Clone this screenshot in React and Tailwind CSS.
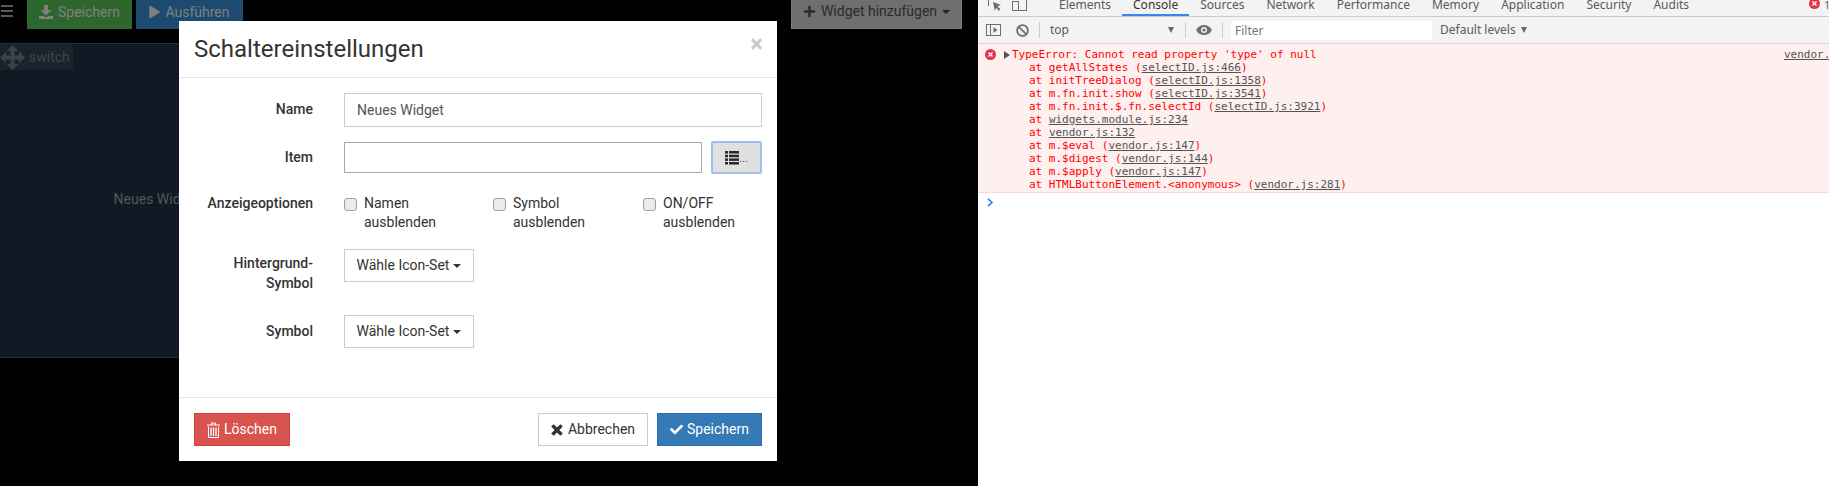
import React from 'react';
import { FaPlus, FaPlay, FaCheck } from 'react-icons/fa';

const SaveIcon = () => (
    <svg width="14" height="14" viewBox="0 0 14 14" fill="currentColor">
        <path d="M5 0h4v5h3.500L7 10.500 1.500 5H5z" />
        <path d="M0 11h4.500l2.500 1.500 2.500-1.500H14v3H0z" />
    </svg>
);

const MoveIcon = () => (
    <svg width="25" height="25" viewBox="0 0 25 25" fill="#3b424a" className="shrink-0">
        <path d="M12.500 0l6 6h-4v4.500H19v-4l6 6-6 6v-4h-4.500V19h4l-6 6-6-6h4v-4.500H6v4l-6-6 6-6v4h4.500V6h-4z" />
    </svg>
);

const ListIcon = () => (
    <svg width="14" height="14" viewBox="0 0 14 14" fill="#2a2a2a">
        <rect x="0" y="0" width="3" height="2.500" />
        <rect x="4" y="0" width="10" height="2.500" />
        <rect x="0" y="3.700" width="3" height="2.500" />
        <rect x="4" y="3.700" width="10" height="2.500" />
        <rect x="0" y="7.400" width="3" height="2.500" />
        <rect x="4" y="7.400" width="10" height="2.500" />
        <rect x="0" y="11" width="3" height="2.500" />
        <rect x="4" y="11" width="10" height="2.500" />
    </svg>
);

const TrashIcon = () => (
    <svg width="13" height="16" viewBox="0 0 13 16" fill="none" stroke="#fff" strokeWidth="1">
        <path d="M0 3h13M4.500 3V1h4v2" />
        <path d="M1.500 4.500v11h10v-11" />
        <path d="M4 5.500v8.500M6.500 5.500v8.500M9 5.500v8.500" strokeWidth="1.300" />
    </svg>
);

const RemoveIcon = () => (
    <svg width="12" height="12" viewBox="0 0 12 12" fill="#333">
        <path d="M2.600 0.200L6 3.600 9.400 0.200 11.800 2.600 8.400 6l3.400 3.400-2.400 2.400L6 8.400l-3.400 3.400L0.200 9.400 3.600 6 0.200 2.600z" />
    </svg>
);

const Caret = ({ className }) => (
    <span className={`inline-block w-0 h-0 border-x-[4px] border-x-transparent border-t-[4px] ${className}`} />
);

const FormRow = ({ label, children, className, labelClass }) => (
    <div className={`flex items-start ${className}`}>
        <label className={`w-[119px] mr-[31px] text-right font-medium text-[#333] leading-[20px] shrink-0 ${labelClass}`}>{label}</label>
        {children}
    </div>
);

const Check = ({ children, className }) => (
    <label className={`flex items-start gap-[7px] leading-[19px] text-[#333] ${className}`}>
        <input type="checkbox" className="appearance-none w-[13px] h-[13px] mt-[4px] rounded-[3px] border border-[#a0a0a0] bg-[#ececec] shrink-0" />
        <span>{children}</span>
    </label>
);

const IconSetDropdown = () => (
    <button className="flex items-center gap-[4px] h-[33px] w-[130px] justify-center border border-[#ccc] bg-white text-[#333]">
        Wähle Icon-Set <Caret className="border-t-[#333]" />
    </button>
);

const Modal = () => (
    <div className="absolute left-[179px] top-[21px] w-[598px] h-[440px] bg-white flex flex-col text-[14px]">
        <div className="h-[57px] shrink-0 flex items-start justify-between border-b border-[#e5e5e5] pl-[15px] pr-[14px]">
            <h4 className="text-[24px] leading-[56px] text-[#333]">Schaltereinstellungen</h4>
            <span className="text-[#c8c8c8] text-[24px] leading-[46px] font-bold">×</span>
        </div>
        <div className="flex-1 px-[15px] pt-[15px]">
            <FormRow label="Name" className="h-[34px]" labelClass="pt-[6px]">
                <input readOnly value="Neues Widget" className="w-[418px] h-[34px] border border-[#ccc] px-[12px] text-[#555] outline-none" />
            </FormRow>
            <FormRow label="Item" className="mt-[14px] h-[33px]" labelClass="pt-[6px]">
                <div className="flex items-center gap-[9px]">
                    <input readOnly className="w-[358px] h-[31px] border border-[#a9a9a9] outline-none" />
                    <button className="w-[51px] h-[33px] flex items-center justify-center bg-[#e0e0e0] border-2 border-[#9ec0ee] rounded-[2px] text-[#555] text-[11px]">
                        <ListIcon />
                        <span className="leading-[14px] pt-[3px]">...</span>
                    </button>
                </div>
            </FormRow>
            <FormRow label="Anzeigeoptionen" className="mt-[20px] h-[41px]" labelClass="-mt-[1px]">
                <div className="flex">
                    <Check className="w-[149px]">Namen<br />ausblenden</Check>
                    <Check className="w-[150px]">Symbol<br />ausblenden</Check>
                    <Check className="w-[119px]">ON/OFF<br />ausblenden</Check>
                </div>
            </FormRow>
            <FormRow label={<>Hintergrund-<br />Symbol</>} className="mt-[14px] h-[33px]" labelClass="pt-[4px]">
                <IconSetDropdown />
            </FormRow>
            <FormRow label="Symbol" className="mt-[33px] h-[33px]" labelClass="pt-[6px]">
                <IconSetDropdown />
            </FormRow>
        </div>
        <div className="h-[64px] shrink-0 border-t border-[#e5e5e5] px-[15px] pt-[15px] flex items-start">
            <button className="h-[33px] w-[96px] flex items-center justify-center gap-[4px] bg-[#d9534f] border border-[#d43f3a] text-white">
                <TrashIcon /> Löschen
            </button>
            <button className="ml-auto h-[33px] w-[110px] flex items-center justify-center gap-[5px] bg-white border border-[#ccc] text-[#333]">
                <RemoveIcon /> Abbrechen
            </button>
            <button className="ml-[9px] h-[33px] w-[105px] flex items-center justify-center gap-[4px] bg-[#337ab7] border border-[#2e6da4] text-white">
                <FaCheck className="w-[13px] h-[13px]" /> Speichern
            </button>
        </div>
    </div>
);

const LeftApp = () => (
    <div className="relative w-[978px] shrink-0 bg-black overflow-hidden font-['Roboto',sans-serif] text-[14px]">
        <div className="h-[43px] flex items-start">
            <div className="w-[27px] pl-[1px] pt-[5px] flex flex-col gap-[3px] shrink-0">
                <span className="block w-[12px] h-[2px] bg-[#5a5a5a]" />
                <span className="block w-[12px] h-[2px] bg-[#5a5a5a]" />
                <span className="block w-[12px] h-[2px] bg-[#5a5a5a]" />
            </div>
            <button className="h-[29px] w-[105px] flex items-center justify-center gap-[5px] pb-[5px] bg-[#2e672e] text-[#808080] text-[14px]">
                <SaveIcon /> Speichern
            </button>
            <button className="ml-[4px] h-[29px] w-[107px] flex items-center justify-center gap-[5px] pb-[5px] bg-[#1c4a70] text-[#808080]">
                <FaPlay className="w-[11px] h-[12px]" /> Ausführen
            </button>
            <button className="ml-[548px] h-[29px] w-[171px] flex items-center justify-center gap-[5px] pb-[5px] bg-[#6f6f6f] border border-[#7c7c7c] border-t-0 text-[#2a2a2a]">
                <FaPlus className="w-[13px] h-[13px]" /> Widget hinzufügen <Caret className="border-t-[#222]" />
            </button>
        </div>
        <div className="w-[314px] h-[315px] bg-[#111a24] border-y border-[#2a3038] flex flex-col">
            <div className="w-[73px] h-[26px] shrink-0 bg-[#1a222c] flex items-center gap-[4px] text-[#3f464e] text-[14px]">
                <MoveIcon /> switch
            </div>
            <div className="flex-1 flex items-center justify-center pb-[28px] text-[#51575e]">
                <span>Neues Widget</span>
            </div>
        </div>
        <Modal />
    </div>
);

const InspectIcon = () => (
    <svg width="14" height="13" viewBox="0 0 14 13" fill="none" className="shrink-0">
        <path d="M0.500 8V0.500H10" stroke="#6e6e6e" />
        <path d="M5 4l8 3-3.500 1.200 3 3-1.500 1.500-3-3-1.200 3.300z" fill="#6e6e6e" />
    </svg>
);

const DeviceIcon = () => (
    <svg width="15" height="13" viewBox="0 0 15 13" fill="none" stroke="#6e6e6e" className="shrink-0">
        <path d="M4 0.500h10.500v12H4" />
        <rect x="0.500" y="3.500" width="6" height="9" />
    </svg>
);

const ErrorIcon = ({ className }) => (
    <svg width="11" height="11" viewBox="0 0 11 11" className={className}>
        <circle cx="5.500" cy="5.500" r="5.500" fill="#e8334a" />
        <path d="M3.500 3.500l4 4M7.500 3.500l-4 4" stroke="#fff" strokeWidth="1.400" />
    </svg>
);

const Sep = ({ className }) => <span className={`block w-px h-[16px] bg-[#ccc] shrink-0 ${className}`} />;

const tabs = ['Elements', 'Console', 'Sources', 'Network', 'Performance', 'Memory', 'Application', 'Security', 'Audits'];

const TabBar = () => (
    <div className="relative h-[17px] shrink-0 bg-[#f3f3f3] border-b border-[#ccc] flex items-end overflow-hidden">
        <div className="w-[69px] h-[16px] flex items-end pl-[10px] gap-[10px] pb-[5px] shrink-0">
            <InspectIcon />
            <DeviceIcon />
        </div>
        <div className="flex h-[16px] text-[12px] text-[#5a5a5a] ml-[1px]">
            {tabs.map((t) => (
                <span key={t} className={`h-[16px] px-[11px] leading-[9px] ${t === 'Console' ? 'border-b-2 border-[#3e82f7] text-[#333]' : ''}`}>{t}</span>
            ))}
        </div>
        <span className="absolute right-0 top-0 h-[10px] w-[20px] overflow-hidden text-[11px] text-[#666] leading-[9px] flex">
            <ErrorIcon className="-mt-[2px] shrink-0" />
            <span className="ml-[4px]">1</span>
        </span>
    </div>
);

const Toolbar = () => (
    <div className="h-[27px] shrink-0 bg-[#f3f3f3] border-b border-[#d6d6d6] flex items-center text-[12px] text-[#5a5a5a]">
        <svg width="15" height="12" viewBox="0 0 15 12" className="ml-[8px] shrink-0" fill="none" stroke="#6e6e6e">
            <rect x="0.500" y="0.500" width="14" height="11" />
            <path d="M4.500 0.500v11" />
            <path d="M7.500 3l4 3-4 3z" fill="#6e6e6e" stroke="none" />
        </svg>
        <svg width="13" height="13" viewBox="0 0 13 13" className="ml-[15px] shrink-0" fill="none" stroke="#6e6e6e" strokeWidth="1.800">
            <circle cx="6.500" cy="6.500" r="5.400" />
            <path d="M2.800 2.800l7.400 7.400" />
        </svg>
        <Sep className="ml-[10px]" />
        <span className="ml-[10px] w-[118px] shrink-0">top</span>
        <span className="w-0 h-0 border-x-[3.5px] border-x-transparent border-t-[6px] border-t-[#666] shrink-0" />
        <Sep className="ml-[11px]" />
        <svg width="16" height="10" viewBox="0 0 16 10" className="ml-[10px] shrink-0" fill="#6e6e6e">
            <path fillRule="evenodd" d="M8 0c3.500 0 6.500 2 8 5-1.500 3-4.500 5-8 5S1.500 8 0 5c1.500-3 4.500-5 8-5zm0 2a3 3 0 100 6 3 3 0 000-6z" />
            <circle cx="8" cy="5" r="1.600" />
        </svg>
        <Sep className="ml-[10px]" />
        <div className="ml-[8px] w-[201px] h-[19px] bg-white pl-[4px] leading-[19px] text-[#757575] shrink-0">Filter</div>
        <span className="ml-[8px]">Default levels</span>
        <span className="ml-[5px] w-0 h-0 border-x-[3.5px] border-x-transparent border-t-[6px] border-t-[#666]" />
    </div>
);

const L = ({ children }) => <a className="underline text-[#545454]">{children}</a>;

const stack = [
    <>at getAllStates (<L>selectID.js:466</L>)</>,
    <>at initTreeDialog (<L>selectID.js:1358</L>)</>,
    <>at m.fn.init.show (<L>selectID.js:3541</L>)</>,
    <>at m.fn.init.$.fn.selectId (<L>selectID.js:3921</L>)</>,
    <>at <L>widgets.module.js:234</L></>,
    <>at <L>vendor.js:132</L></>,
    <>at m.$eval (<L>vendor.js:147</L>)</>,
    <>at m.$digest (<L>vendor.js:144</L>)</>,
    <>at m.$apply (<L>vendor.js:147</L>)</>,
    <>at HTMLButtonElement.&lt;anonymous&gt; (<L>vendor.js:281</L>)</>,
];

const ConsoleMsg = () => (
    <div className="relative h-[149px] shrink-0 bg-[#fff0f0] border-b border-[#ffd6d6] pt-[4px] font-['DejaVu_Sans_Mono',monospace] text-[11px] leading-[13px] text-[#f00]">
        <div className="flex items-center h-[13px]">
            <ErrorIcon className="ml-[7px] shrink-0" />
            <span className="ml-[8px] w-0 h-0 border-y-[4px] border-y-transparent border-l-[6px] border-l-[#555] shrink-0" />
            <span className="ml-[2px] whitespace-pre">TypeError: Cannot read property 'type' of null</span>
            <a className="absolute left-[806px] underline text-[#545454] whitespace-nowrap">vendor.js:1</a>
        </div>
        {stack.map((s, i) => (
            <div key={i} className="pl-[51px] whitespace-pre">{s}</div>
        ))}
    </div>
);

const DevTools = () => (
    <div className="flex-1 min-w-0 bg-white flex flex-col overflow-hidden font-['Noto_Sans',sans-serif]">
        <TabBar />
        <Toolbar />
        <ConsoleMsg />
        <svg width="7" height="9" viewBox="0 0 7 9" fill="none" stroke="#367cf1" strokeWidth="1.600" className="ml-[9px] mt-[5px]">
            <path d="M1 0.800l4 3.700-4 3.700" />
        </svg>
    </div>
);

const App = () => {
    return (
        <div className="flex w-[1829px] h-[486px] overflow-hidden">
            <LeftApp />
            <DevTools />
        </div>
    );
};

export default App;
